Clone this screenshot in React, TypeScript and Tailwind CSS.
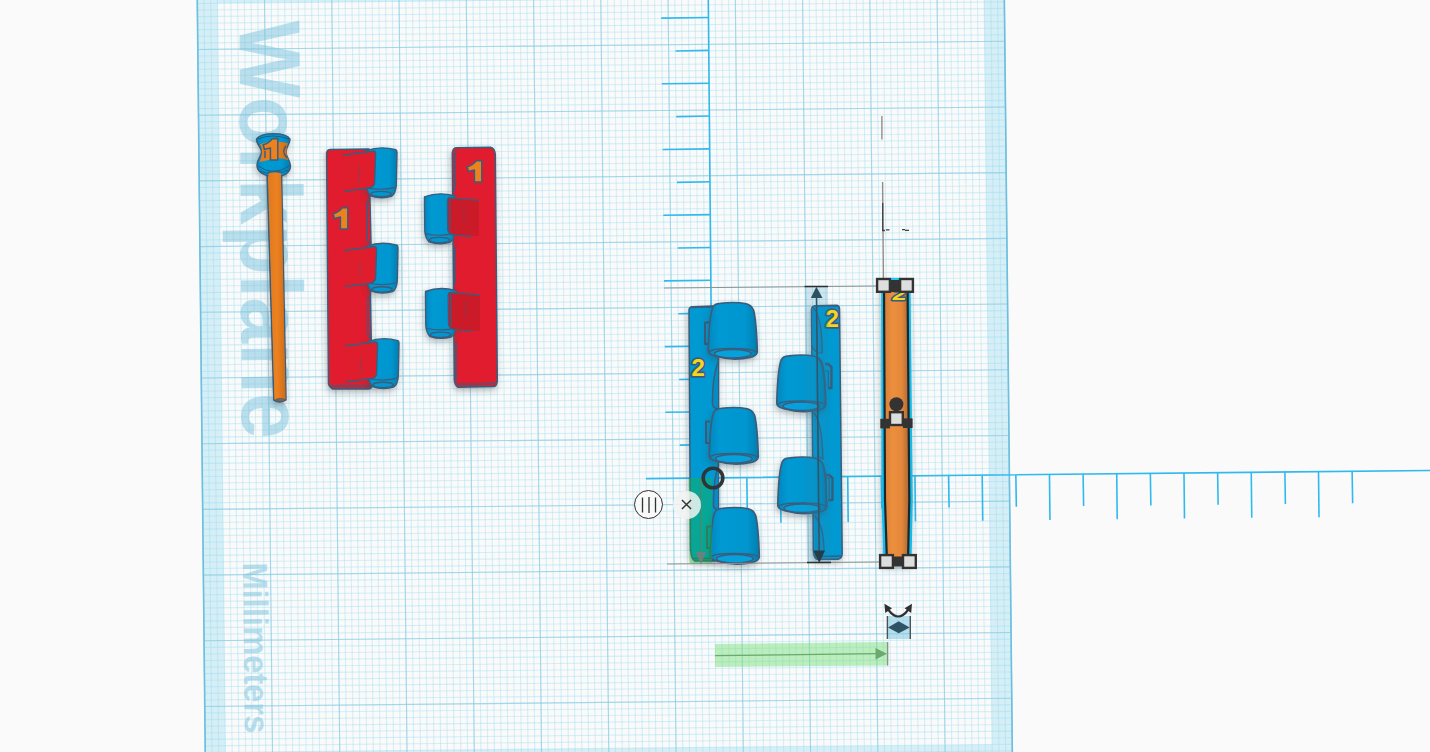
import React from "react";

const EDGE = "#3b5d7c";
const range = (n: number) => Array.from({ length: n }, (_, i) => i);

function Workplane() {
  return (
    <g>
      <g transform="matrix(1 -0.0102 0.0106 1 197.1 -16.2)">
        <rect width="807" height="788.4" fill="#fafafa" />
        <path d="M0 0H807V788.4H0ZM20.2 19.7V768.7H786.8V19.7Z" fill="#d6eef6" fillRule="evenodd" />
        {range(121).map((i) => (
          <path key={`v${i}`} d={`M${i * 6.725} 0V788.4`} stroke={i % 2 ? "#8fdcf4" : "#a3d9ea"} strokeOpacity="0.38" strokeWidth="1.1" />
        ))}
        {range(121).map((i) => (
          <path key={`h${i}`} d={`M0 ${i * 6.57}H807`} stroke={i % 2 ? "#8fdcf4" : "#a3d9ea"} strokeOpacity="0.38" strokeWidth="1.1" />
        ))}
        {range(13).map((i) => (
          <path key={`V${i}`} d={`M${i * 67.25} 0V788.4`} stroke="#86cbe4" strokeOpacity="0.65" strokeWidth="1.1" />
        ))}
        {range(13).map((i) => (
          <path key={`H${i}`} d={`M0 ${i * 65.7}H807`} stroke="#86cbe4" strokeOpacity="0.65" strokeWidth="1.1" />
        ))}
        <rect width="807" height="788.4" fill="none" stroke="#6cbfdf" strokeWidth="1.6" />
      </g>
      <g className="font-['Liberation_Sans',sans-serif] font-bold" fill="#79c2dc" fillOpacity="0.5">
        <text transform="matrix(0.006 1 -1 0.01 239.5 21)" fontSize="87" textLength="418" lengthAdjust="spacingAndGlyphs">Workplane</text>
        <text transform="matrix(0.011 1 -1 0.01 243 562.5)" fontSize="34.5" textLength="171" lengthAdjust="spacingAndGlyphs">Millimeters</text>
      </g>
    </g>
  );
}

function Ruler() {
  return (
    <g stroke="#30b9ef" strokeWidth="1.6">
      <path d="M708.3 0L712.6 478M646 478.6L1430 470.5" />
      {range(14).map((i) => {
        const y = 17.8 + i * 32.85;
        const x = (i % 2 ? 675 : 661) + y * 0.0108;
        return <path key={i} d={`M${x} ${y + 0.3}L${708.3 + y * 0.009} ${y - 0.3}`} />;
      })}
      {range(19).map((i) => {
        const x = 746.8 + i * 33.63;
        const y = 478.6 - (x - 646) * 0.0103;
        return <path key={i} d={`M${x} ${y}L${x + 0.5} ${y + (i % 2 ? 45.5 : 32)}`} />;
      })}
    </g>
  );
}

function Digit({ x, y, value, fill, size }: { x: number; y: number; value: string; fill: string; size: number }) {
  return (
    <text
      x={x}
      y={y}
      textAnchor="middle"
      fontSize={size}
      fill={fill}
      stroke={EDGE}
      strokeWidth="3.4"
      strokeLinejoin="round"
      paintOrder="stroke"
      className="font-['Liberation_Sans',sans-serif] font-bold"
    >
      {value}
    </text>
  );
}

/* The heavy "1" used on the red parts. */
function One({ x, y }: { x: number; y: number }) {
  return (
    <path
      transform={`translate(${x} ${y})`}
      d="M14.8 0V21.4H7.4V9.4L1.4 11L0.2 6.2C4.8 5.2 7.4 3 9.3 0.2Z"
      fill="#ec8120"
      stroke={EDGE}
      strokeWidth="1.5"
      strokeLinejoin="round"
    />
  );
}

function PinOne() {
  return (
    <g stroke={EDGE} strokeWidth="1.5" strokeLinejoin="round">
      <g filter="url(#drop)">
        <path d="M267 170L273.8 400Q280 404 286 400L281.5 170Z" fill="url(#orangeRod)" />
        <path d="M256.6 139C261 132 286 132 290 139C290 144 286 147 286 152C286 157 290 160 290.5 166C290 174 282 176.5 273.5 176.5C264 176 257 172 257 165C257 159 261.5 157 261.5 152C261.5 147 256 144 256.6 139Z" fill="url(#cyl)" />
      </g>
      <path d="M260 144Q273 140 288 143C286 148 286 155 288.5 160Q280 157 273 159L259.5 162C262.5 154 263 150 260 144Z" fill="url(#orangeRod)" stroke="none" />
      <path d="M258 139Q272 133 289 139M258 166Q273 177 289 166M260 171Q273 177 288 170" fill="none" strokeWidth="1" stroke="#17628e" />
      <One x={263} y={138.5} />
      <path d="M265 151V158M286 146Q281 151 287 158" fill="none" />
      <path d="M268.5 172.5H281L285.5 399Q280 401 274.5 399Z" fill="url(#orangeRod)" stroke="none" />
      <path d="M267.3 173Q274 170 281 172.5" fill="none" />
      <ellipse cx="280.2" cy="400" rx="4.6" ry="1.3" fill="#a9622d" strokeWidth="1" />
    </g>
  );
}

function Knuckle({ x, y }: { x: number; y: number }) {
  return (
    <g transform={`translate(${x} ${y})`} stroke={EDGE} strokeWidth="1.4" fill="none" strokeLinejoin="round">
      <path d="M0 3.5Q14 -1.8 30 2.5Q31 3 31 5L30.3 38Q29.5 47 25.5 49Q15 52 4.5 48.5Q1 45 0.3 38Z" fill="url(#cyl)" filter="url(#drop)" />
      <path d="M0.3 40Q15 44 30.2 39.8" strokeWidth="1.2" />
      <ellipse cx="15" cy="46.8" rx="10.3" ry="2.7" strokeWidth="1.4" />
    </g>
  );
}

function RedHinge() {
  return (
    <g stroke={EDGE} strokeWidth="1.5" strokeLinejoin="round">
      <g filter="url(#drop)">
        <path d="M326.6 153Q327.2 149.5 330.5 149.5L369 149L370 201L371 243L370.5 297L372 386Q371 389 368 389H333Q330 388 328.5 384Z" fill="#e01d2d" />
        <path d="M452.3 153Q453 148 456 147.8L490.5 147.2Q494.5 148 495.3 154L497.3 381Q497 386 494 386.6L458 387.2Q455 386 454.3 380Z" fill="#e01d2d" />
      </g>
      <path d="M369 201L367 202V240L370 243M370 297L368 298V335L371 339M330.5 386H371" fill="none" />
      <path d="M456 151L454.7 155V189L452.6 192M456.5 247L454.8 249L455 285M456.5 342L456 345V381M456 384Q476 384.8 496 383.6" fill="none" />
      {range(3).map((i) => (
        <g key={i}>
          <Knuckle x={366 + i} y={147.3 + i * 95.4} />
          <path d={`M${343 + i} ${155 + i * 95.4}L${374 + i} ${151.5 + i * 95.4}Q${376 + i} ${152 + i * 95.4} ${375.5 + i} ${155 + i * 95.4}L${374.5 + i} ${184 + i * 95.4}Q${373 + i} ${187 + i * 95.4} ${370 + i} ${188 + i * 95.4}L${345 + i} ${191 + i * 95.4}Z`} fill="#e01d2d" stroke="none" />
          <path d={`M${343 + i} ${155.2 + i * 95.4}L${374 + i} ${151 + i * 95.4}Q${376 + i} ${152 + i * 95.4} ${375.5 + i} ${155 + i * 95.4}L${374.5 + i} ${184 + i * 95.4}Q${373 + i} ${187 + i * 95.4} ${370 + i} ${187.8 + i * 95.4}L${344 + i} ${191.2 + i * 95.4}`} fill="none" strokeWidth="1.5" />
          <path d={`M${359 + i} ${166 + i * 95.4}V${182 + i * 95.4}`} strokeWidth="0.8" strokeOpacity="0.6" />
        </g>
      ))}
      {range(2).map((i) => (
        <g key={i}>
          <Knuckle x={424.5 + i} y={193.3 + i * 94.7} />
          <g transform={`translate(${i * 0.8} ${i * 94.7})`}>
            <path d="M448 198L479 200.5V236L455 235Q448 234 447.5 230Z" fill="#cb1a28" stroke="none" />
            <path d="M479 200.3L449 197.6Q447.3 198 447.3 202L447.7 230Q449 235 456 235.2L472 236.5M450 198.5V231" fill="none" strokeWidth="1.3" />
            <path d="M464 206V222" strokeWidth="0.8" strokeOpacity="0.5" />
          </g>
        </g>
      ))}
      <One x={333} y={207.5} />
      <One x={467} y={160.5} />
    </g>
  );
}

function Dome({ x, y }: { x: number; y: number }) {
  return (
    <g transform={`translate(${x} ${y})`} stroke={EDGE} strokeWidth="1.7" fill="none" strokeLinejoin="round">
      <path d="M0 48.5C0.4 32 1 14 4.5 5Q6 1.3 12 1Q27 -0.8 38 1.5Q43 2.6 45.3 8C47.5 17 48.6 36 49 49.5Q48.5 53.5 42 55Q25 59 7 54Q0 52 0 48.5Z" fill="url(#cyl)" filter="url(#drop)" />
      <path d="M0.3 50C4 45 43 45 48.8 50" strokeWidth="1.5" />
      <ellipse cx="24.5" cy="51.5" rx="18.3" ry="4.2" fill="#06a0da" strokeWidth="1.5" />
    </g>
  );
}

function BlueHinge() {
  return (
    <g stroke={EDGE} strokeWidth="1.5" strokeLinejoin="round" fill="none">
      <g filter="url(#drop)" fill="#0099d2">
        <path d="M689 310Q689.3 307 692 306.7L713 306L718.5 340V557Q718 560.5 714 561L695 561Q691.5 560 690.5 550Z" />
        <path d="M811.5 309Q812 306 815 305.7L837 305.2Q839.5 306 839.5 309L842.2 554Q842 558.5 838 559.2H817Q813.5 558 813.3 550Z" />
      </g>
      <path d="M690 307.5L712 307M692 558.5H716M814 306L838 305.7M814 556.5L842 556" />
      <path d="M718 362Q712 378 712.5 405Q713 408 718 409M718.5 465Q713 480 713.5 507L718 511" fill="#078cc2" />
      <path d="M813 307Q822 316 822.3 353H818Q812 349 812 345M814 413Q822 421 823 459L817 456M815 516Q824 526 824 551L815 556" fill="#078cc2" strokeWidth="1.2" />
      <path d="M709 322.5H705V344H709M710 421.5H706V443H710M711 526.5H707V548H711" strokeWidth="2" />
      <path d="M825 364H828L831.5 367V388H828M826 475H829L832.5 478V500H828" strokeWidth="2.4" />
      {range(3).map((i) => (
        <Dome key={i} x={708.3 + i} y={302.3 + i * 102.5 + (i === 1 ? 2.5 : 0)} />
      ))}
      <Dome x={776.8} y={354.8} />
      <Dome x={777.8} y={456.8} />
      <path d="M818 358Q827 371 825 405M821 461Q828 470 826 506M825 371H828.3V389M826 478H829.3V498" strokeWidth="1.2" />
      <Digit x={698.2} y={375.8} value="2" fill="#f7d51d" size={24} />
      <Digit x={832.2} y={327} value="2" fill="#f7d51d" size={24} />
    </g>
  );
}

function Dimensions() {
  return (
    <g fill="none">
      <path d="M804.5 287H828L831 562H807Z" fill="#218cb5" fillOpacity="0.2" />
      <path d="M664 288L880 286M667 564L880 562" stroke="#8d9292" />
      <path d="M804.5 286.5H828M807 562.5H831" stroke="#2b3033" strokeWidth="1.4" />
      <path d="M816.5 295L819.2 555" stroke="#31556a" strokeWidth="1.6" />
      <path d="M816.4 286.8L822.5 298H810.8Z" fill="#2d505e" />
      <path d="M819.3 563L825 550.5H813.2Z" fill="#263c46" />
      <path d="M688.5 478H712V563.5H689.5Z" fill="#14c128" fillOpacity="0.35" />
      <path d="M700.4 478V553" stroke="#62805a" />
      <path d="M701 564L706 552H695.5Z" fill="#6b817b" />
      <path d="M715 644L888 642V665.5L715 667Z" fill="#7be080" fillOpacity="0.5" />
      <path d="M715 655.6L877 653.7" stroke="#6ca96f" strokeWidth="1.2" />
      <path d="M875.5 648V659.5L887 653.7Z" fill="#6ca96f" />
      <path d="M887.6 642V665.5" stroke="#879586" strokeWidth="1.4" />
      <path d="M887.5 616H910.5V639H887.5Z" fill="#8bcbe5" fillOpacity="0.6" />
      <path d="M887.4 616V639M910.3 616V639" stroke="#485258" strokeWidth="1.4" />
      <path d="M888 627.5L898.7 621.3L909.7 627.5L898.7 633.3Z" fill="#2f5363" />
      <path d="M888.5 610Q898.3 623 908 610" stroke="#303030" strokeWidth="2.2" />
      <path d="M884.4 603.8L892 608.2L885.3 613ZM912 603.8L904.6 608.2L911.2 613Z" fill="#303030" />
      <path d="M881.9 116V139.5M882.6 182L883.4 278" stroke="#928d8d" strokeWidth="1.4" />
      <path d="M882.7 203V230M882 230.5H885M886 229.8H889.5M902 229.7H905M905 230.4H909" stroke="#424242" strokeWidth="1.3" />
    </g>
  );
}

function Handle({ x, y }: { x: number; y: number }) {
  return <rect x={x - 6.4} y={y - 6.4} width="12.8" height="12.8" fill="#dedede" stroke="#333" strokeWidth="2.4" />;
}

function SelectedPin() {
  return (
    <g>
      <path d="M883.6 282H908L910.3 500L909 563H886L884 500Z" fill="none" stroke="#12bce9" strokeWidth="5" filter="url(#drop)" />
      <path d="M884 282H907.5L909.3 500L908 563H887L885 500Z" fill="url(#selRod)" stroke="#1c2529" strokeWidth="2.2" />
      <g transform="translate(898.5 299.8) skewX(-12) scale(1.2 0.85)">
        <Digit x={0} y={0} value="2" fill="#f7d51d" size={21} />
      </g>
      <g fill="#333">
        <rect x="888" y="279" width="14" height="13" />
        <rect x="891" y="277.8" width="8" height="2.2" fill="#18c9ee" />
        <rect x="890" y="556.5" width="16" height="10" />
        <rect x="880.3" y="418.8" width="9.6" height="9.6" />
        <rect x="903" y="418.4" width="9.6" height="9.6" />
        <circle cx="896.4" cy="404.2" r="7" />
      </g>
      <Handle x={883.5} y={285.4} />
      <Handle x={906.5} y={285.4} />
      <Handle x={896.4} y={418.6} />
      <Handle x={886.5} y={561.5} />
      <Handle x={909.4} y={561.5} />
    </g>
  );
}

export default function App() {
  return (
    <main className="relative h-[752px] w-[1430px] overflow-hidden bg-[#fafafa]">
      <svg viewBox="0 0 1430 752" className="block h-full w-full">
        <defs>
          <linearGradient id="cyl">
            <stop offset="0" stopColor="#0788c0" />
            <stop offset="0.22" stopColor="#0099d2" />
            <stop offset="0.75" stopColor="#0096cf" />
            <stop offset="1" stopColor="#067eae" />
          </linearGradient>
          <linearGradient id="orangeRod">
            <stop offset="0" stopColor="#df7a20" />
            <stop offset="0.5" stopColor="#ed821f" />
            <stop offset="1" stopColor="#cc6d1b" />
          </linearGradient>
          <linearGradient id="selRod">
            <stop offset="0" stopColor="#d8813a" />
            <stop offset="0.35" stopColor="#ec8f3d" />
            <stop offset="0.7" stopColor="#e3873a" />
            <stop offset="1" stopColor="#a96733" />
          </linearGradient>
          <filter id="drop" x="-30%" y="-10%" width="160%" height="130%">
            <feDropShadow dx="-1" dy="3" stdDeviation="3" floodColor="#34424a" floodOpacity="0.35" />
          </filter>
        </defs>
        <Workplane />
        <Ruler />
        <PinOne />
        <RedHinge />
        <BlueHinge />
        <Dimensions />
        <SelectedPin />
        <circle cx="713" cy="478" r="9.8" fill="none" stroke="#303537" strokeWidth="3.6" />
      </svg>
      <button aria-label="Ruler mode" className="absolute left-[634px] top-[490px] flex h-[29px] w-[29px] items-center justify-center rounded-full border-[1.5px] border-[#303030] bg-[#fafafa]/90">
        <svg viewBox="0 0 16 16" className="h-4 w-4" stroke="#333" strokeWidth="1.3">
          <path d="M1.5 0.5V15.5M8 0V16M14.5 0.5V15.5" />
        </svg>
      </button>
      <button aria-label="Dismiss ruler" className="absolute left-[672.5px] top-[490.5px] flex h-7 w-7 items-center justify-center rounded-full bg-[#f1f3f2]/85">
        <svg viewBox="0 0 12 12" className="h-[11px] w-[11px]" stroke="#333" strokeWidth="1.6">
          <path d="M1 1L11 11M11 1L1 11" />
        </svg>
      </button>
    </main>
  );
}
